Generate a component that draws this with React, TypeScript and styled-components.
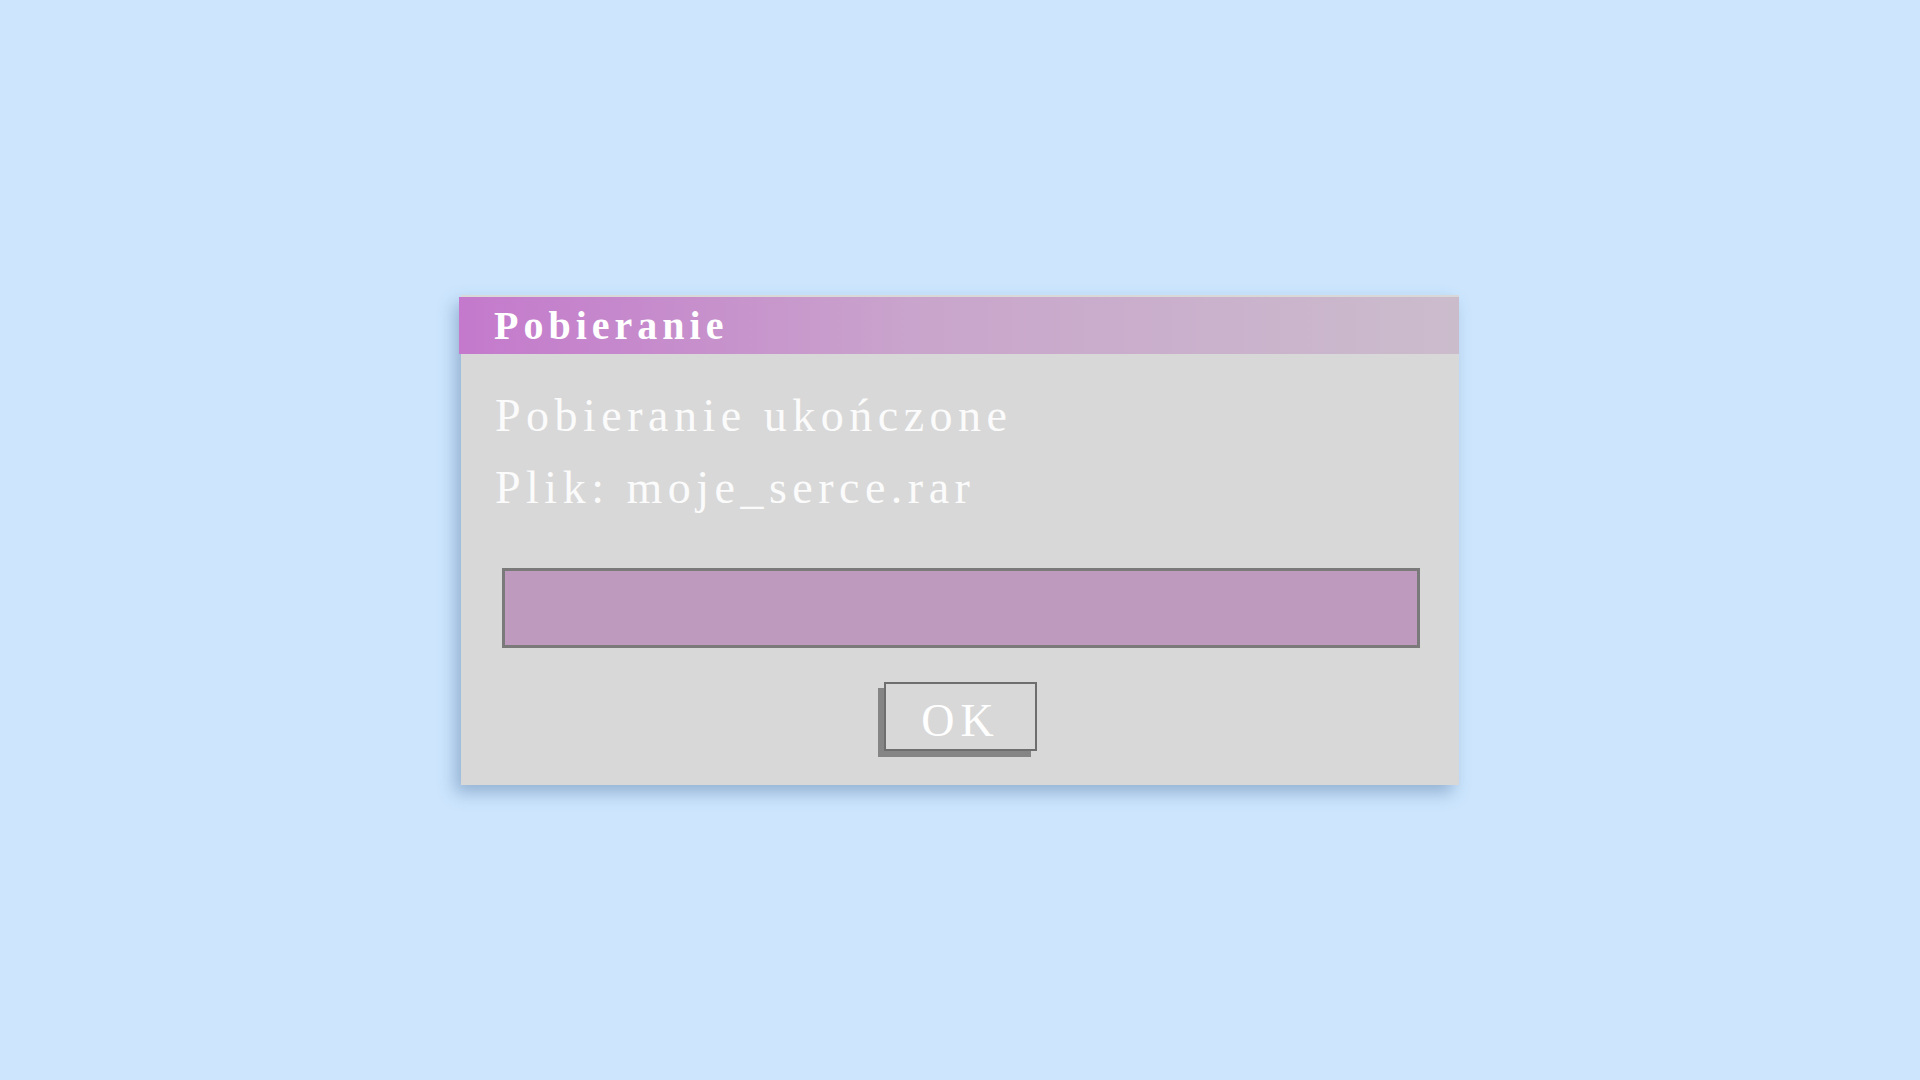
import React from "react";
import styled, { createGlobalStyle } from "styled-components";

const GlobalStyle = createGlobalStyle`
  html, body {
    margin: 0;
    padding: 0;
    background: #cde6fe;
  }
  #root {
    min-height: 100vh;
  }
`;

const Desktop = styled.main`
  width: 100%;
  height: 1080px;
  display: flex;
  align-items: center;
  justify-content: center;
  background: #cde6fe;
  font-family: "Liberation Serif", "Times New Roman", serif;
`;

const Window = styled.section`
  width: 998px;
  height: 490px;
  box-sizing: border-box;
  display: flex;
  flex-direction: column;
  background: #d8d8d8;
  box-shadow: -6px 8px 16px rgba(40, 80, 130, 0.35);
`;

const TitleBar = styled.header`
  height: 57px;
  margin: 2px 0 0 -2px;
  display: flex;
  align-items: center;
  padding-left: 35px;
  background: linear-gradient(90deg, #c479cc 0%, #c9a4cc 45%, #cbbccc 100%);
`;

const Title = styled.h1`
  margin: 0;
  font-size: 40px;
  font-weight: 700;
  letter-spacing: 5px;
  color: #ffffff;
  line-height: 1;
`;

const Message = styled.div`
  padding: 26px 0 0 34px;
  display: flex;
  flex-direction: column;
`;

const Line = styled.p`
  margin: 0;
  font-size: 46px;
  line-height: 72px;
  letter-spacing: 5.5px;
  color: #fbfbfb;
  white-space: nowrap;
`;

const Progress = styled.div`
  height: 80px;
  box-sizing: border-box;
  margin: 44px 39px 0 41px;
  border: 3px solid #7a7a7a;
  background: #bd9bbe;
  box-shadow: inset 0 0 0 1px #a98fa9;
`;

const Fill = styled.div`
  height: 100%;
  background: #be9bbe;
`;

const Actions = styled.div`
  display: flex;
  justify-content: center;
  padding: 34px 0 34px 1px;
`;

const OkButton = styled.button`
  width: 153px;
  height: 69px;
  box-sizing: border-box;
  border: 2px solid #6e6e6e;
  background: #d8d8d8;
  box-shadow: -6px 6px 0 #858585;
  color: #ffffff;
  font-family: "Liberation Serif", "Times New Roman", serif;
  font-size: 46px;
  letter-spacing: 6px;
  padding: 8px 0 0 0;
  line-height: 1;
  cursor: pointer;
`;

export default function App() {
  const progress = 100;
  return (
    <>
      <GlobalStyle />
      <Desktop>
        <Window>
          <TitleBar>
            <Title>Pobieranie</Title>
          </TitleBar>
          <Message>
            <Line>Pobieranie ukończone</Line>
            <Line>Plik: moje_serce.rar</Line>
          </Message>
          <Progress>
            <Fill style={{ width: `${progress}%` }} />
          </Progress>
          <Actions>
            <OkButton>OK</OkButton>
          </Actions>
        </Window>
      </Desktop>
    </>
  );
}
